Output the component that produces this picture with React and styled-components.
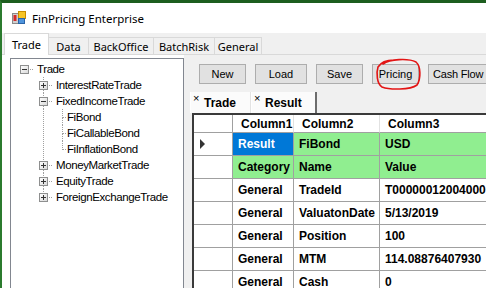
import React from "react";
import styled, { createGlobalStyle } from "styled-components";

const GlobalStyle = createGlobalStyle`
  html, body {
    margin: 0;
    padding: 0;
    overflow: hidden;
    background: #fff;
  }
  body {
    font-family: "Liberation Sans", Arial, sans-serif;
  }
`;

const treeNodes = [
  { label: "Trade", box: "minus", guides: [], up: false, down: false },
  { label: "InterestRateTrade", box: "plus", guides: [false], up: true, down: true },
  { label: "FixedIncomeTrade", box: "minus", guides: [false], up: true, down: true },
  { label: "FiBond", box: null, guides: [false, true], up: true, down: true },
  { label: "FiCallableBond", box: null, guides: [false, true], up: true, down: true },
  { label: "FiInflationBond", box: null, guides: [false, true], up: true, down: false },
  { label: "MoneyMarketTrade", box: "plus", guides: [false], up: true, down: true },
  { label: "EquityTrade", box: "plus", guides: [false], up: true, down: true },
  { label: "ForeignExchangeTrade", box: "plus", guides: [false], up: true, down: false },
];

const rows = [
  { cells: ["Result", "FiBond", "USD"], green: true, current: true },
  { cells: ["Category", "Name", "Value"], green: true },
  { cells: ["General", "TradeId", "T00000012004000"] },
  { cells: ["General", "ValuatonDate", "5/13/2019"] },
  { cells: ["General", "Position", "100"] },
  { cells: ["General", "MTM", "114.08876407930"] },
  { cells: ["General", "Cash", "0"] },
];

const Window = styled.div`
  width: 486px;
  height: 288px;
  box-sizing: border-box;
  border-top: 3px solid #1d5e1f;
  border-left: 2px solid #2b7b2e;
  display: flex;
  flex-direction: column;
  overflow: hidden;
  background: #fff;
`;

const TitleBar = styled.div`
  height: 30px;
  flex: none;
  display: flex;
  align-items: center;
  gap: 6px;
  padding-left: 10px;
  font-family: "Noto Sans", sans-serif;
  font-size: 11.5px;
  color: #000;
`;

const TabStrip = styled.div`
  height: 22px;
  flex: none;
  box-sizing: border-box;
  display: flex;
  align-items: flex-end;
  padding-left: 3px;
  background: #f0f0f0;
  border-bottom: 1px solid #d9d9d9;
`;

const Tab = styled.div`
  width: ${(p) => p.$w}px;
  height: ${(p) => (p.$active ? 22 : 17)}px;
  margin-bottom: ${(p) => (p.$active ? -1 : 0)}px;
  margin-left: -1px;
  box-sizing: border-box;
  display: flex;
  align-items: center;
  justify-content: center;
  border: 1px solid #d9d9d9;
  border-bottom: none;
  background: ${(p) => (p.$active ? "#fff" : "#f0f0f0")};
  font-family: "Noto Sans", sans-serif;
  font-size: 11px;
  color: #000;
  white-space: nowrap;
  position: relative;
  z-index: ${(p) => (p.$active ? 1 : 0)};
`;

const Body = styled.div`
  flex: 1;
  min-height: 0;
  display: flex;
`;

const LeftPane = styled.div`
  width: 182px;
  flex: none;
  box-sizing: border-box;
  padding: 3px 0 0 8px;
  display: flex;
  background: #fff;
`;

const TreeBox = styled.div`
  width: 174px;
  box-sizing: border-box;
  border: 1px solid #828790;
  border-bottom: none;
  padding-top: 2px;
  background: #fff;
`;

const TreeRow = styled.div`
  height: 16px;
  display: flex;
  align-items: center;
  padding-left: 4px;
`;

const TreeLabel = styled.span`
  margin-left: ${(p) => (p.$leaf ? 1 : 3)}px;
  font-size: 11.5px;
  letter-spacing: -0.4px;
  color: #000;
  white-space: nowrap;
`;

const RightPane = styled.div`
  flex: 1;
  min-width: 0;
  display: flex;
  flex-direction: column;
  background: #f0f0f0;
  padding-top: 9px;
`;

const Toolbar = styled.div`
  height: 20px;
  flex: none;
  display: flex;
  gap: 9px;
  padding-left: 15px;
  position: relative;
`;

const Button = styled.div`
  width: ${(p) => p.$w}px;
  flex: none;
  box-sizing: border-box;
  display: flex;
  align-items: center;
  justify-content: ${(p) => (p.$left ? "flex-start" : "center")};
  padding-left: ${(p) => (p.$left ? 4 : 0)}px;
  letter-spacing: ${(p) => (p.$left ? "-0.2px" : "0")};
  background: #e1e1e1;
  border: 1px solid #adadad;
  font-size: 11px;
  color: #000;
  white-space: nowrap;
`;

const Annotation = styled.svg`
  position: absolute;
  left: 190px;
  top: -7px;
  pointer-events: none;
`;

const DocTabs = styled.div`
  height: 22px;
  flex: none;
  margin-top: 7px;
  padding-left: 6px;
  display: flex;
  align-items: flex-end;
`;

const DocTab = styled.div`
  width: ${(p) => p.$w}px;
  height: 21px;
  box-sizing: border-box;
  display: flex;
  align-items: center;
  padding-left: 2px;
  background: #fbfbfb;
  border-left: 1px solid #fff;
  border-right: ${(p) => (p.$last ? "2px solid #6d6d6d" : "1px solid #e3e3e3")};
`;

const Close = styled.span`
  width: 11px;
  align-self: flex-start;
  margin-top: 1px;
  font-size: 11px;
  line-height: 10px;
  color: #000;
`;

const DocLabel = styled.span`
  font-size: 12px;
  font-weight: bold;
  color: #000;
`;

const Grid = styled.div`
  flex: 1;
  min-height: 0;
  margin-left: 8px;
  border-top: 2px solid #3a3a3a;
  border-left: 2px solid #3a3a3a;
  background: #fff;
  display: grid;
  grid-template-columns: 39px 61px 86px 160px;
  grid-template-rows: 18px;
  grid-auto-rows: 23px;
  overflow: hidden;
`;

const Cell = styled.div`
  box-sizing: border-box;
  display: flex;
  align-items: center;
  padding-left: ${(p) => (p.$head ? 8 : 5)}px;
  border-right: 1px solid ${(p) => (p.$head ? "#e2e2e2" : "#a0a0a0")};
  border-bottom: 1px solid #a0a0a0;
  background: ${(p) => p.$bg || "#fff"};
  color: ${(p) => p.$color || "#000"};
  font-size: 12px;
  font-weight: bold;
  white-space: nowrap;
  overflow: hidden;
`;

const RowHead = styled.div`
  box-sizing: border-box;
  display: flex;
  align-items: center;
  padding-left: 6px;
  border-right: 1px solid #a0a0a0;
  border-bottom: 1px solid #a0a0a0;
  background: #fff;
`;

function AppIcon() {
  return (
    <svg width="14" height="14" viewBox="0 0 14 14">
      <rect x="0.5" y="2.5" width="6" height="10" fill="#cfcfcf" stroke="#8a8a8a" />
      <rect x="1.5" y="4" width="3" height="6" fill="#d42a2a" />
      <rect x="6.5" y="0.5" width="7" height="7" fill="#f6c425" stroke="#c98d00" />
      <rect x="6.5" y="7.5" width="6" height="5" fill="#4f95dc" stroke="#2a63a8" />
    </svg>
  );
}

function Connector({ box, up, down }) {
  const leaf = !box;
  const w = leaf ? 13 : 19;
  const dot = { stroke: "#a0a0a0", strokeWidth: 1, strokeDasharray: "1 1" };
  return (
    <svg width={w} height="16" viewBox={`0 0 ${w} 16`} shapeRendering="crispEdges">
      {leaf ? (
        <>
          {up && <line x1="9.5" y1="0" x2="9.5" y2="8.5" {...dot} />}
          {down && <line x1="9.5" y1="8.5" x2="9.5" y2="16" {...dot} />}
          <line x1="10" y1="8.5" x2="13" y2="8.5" {...dot} />
        </>
      ) : (
        <>
          {up && <line x1="9.5" y1="0" x2="9.5" y2="4" {...dot} />}
          {down && <line x1="9.5" y1="13" x2="9.5" y2="16" {...dot} />}
          <line x1="15" y1="8.5" x2="19" y2="8.5" {...dot} />
          <defs>
            <linearGradient id="bx" x1="0" y1="0" x2="1" y2="1">
              <stop offset="0" stopColor="#ffffff" />
              <stop offset="1" stopColor="#d8d8d8" />
            </linearGradient>
          </defs>
          <rect x="5.5" y="4.5" width="8" height="8" fill="url(#bx)" stroke="#8e8f8f" />
          <line x1="7" y1="8.5" x2="12" y2="8.5" stroke="#333" />
          {box === "plus" && <line x1="9.5" y1="6" x2="9.5" y2="11" stroke="#333" />}
        </>
      )}
    </svg>
  );
}

function Guide({ on }) {
  return (
    <svg width="19" height="16" viewBox="0 0 19 16" shapeRendering="crispEdges">
      {on && (
        <line x1="9.5" y1="0" x2="9.5" y2="16" stroke="#a0a0a0" strokeDasharray="1 1" />
      )}
    </svg>
  );
}

function PricingCircle() {
  return (
    <Annotation width="48" height="34" viewBox="0 0 48 34">
      <path
        d="M9,7 C16,2 34,1 42,5 C47,9 47,22 43,28 C36,33 16,33 8,30 C3,27 2,16 4,10 C7,5 13,3 20,3"
        fill="none"
        stroke="#e31414"
        strokeWidth="1.6"
        strokeLinecap="round"
      />
    </Annotation>
  );
}

function Triangle() {
  return (
    <svg width="6" height="10" viewBox="0 0 6 10">
      <polygon points="0,0 5,5 0,10" fill="#333" />
    </svg>
  );
}

export default function App() {
  const tabs = [
    { label: "Trade", w: 45, active: true },
    { label: "Data", w: 41 },
    { label: "BackOffice", w: 66 },
    { label: "BatchRisk", w: 62 },
    { label: "General", w: 48 },
  ];
  const buttons = [
    { label: "New", w: 47 },
    { label: "Load", w: 52 },
    { label: "Save", w: 47 },
    { label: "Pricing", w: 47 },
    { label: "Cash Flow", w: 70, left: true },
  ];

  return (
    <>
      <GlobalStyle />
      <Window>
        <TitleBar>
          <AppIcon />
          <span>FinPricing Enterprise</span>
        </TitleBar>
        <TabStrip>
          {tabs.map((t) => (
            <Tab key={t.label} $w={t.w} $active={t.active}>
              {t.label}
            </Tab>
          ))}
        </TabStrip>
        <Body>
          <LeftPane>
            <TreeBox>
              {treeNodes.map((n) => (
                <TreeRow key={n.label}>
                  {n.guides.map((g, i) => (
                    <Guide key={i} on={g} />
                  ))}
                  <Connector box={n.box} up={n.up} down={n.down} />
                  <TreeLabel $leaf={!n.box}>{n.label}</TreeLabel>
                </TreeRow>
              ))}
            </TreeBox>
          </LeftPane>
          <RightPane>
            <Toolbar>
              {buttons.map((b) => (
                <Button key={b.label} $w={b.w} $left={b.left}>
                  {b.label}
                </Button>
              ))}
              <PricingCircle />
            </Toolbar>
            <DocTabs>
              <DocTab $w={61}>
                <Close>×</Close>
                <DocLabel>Trade</DocLabel>
              </DocTab>
              <DocTab $w={66} $last>
                <Close>×</Close>
                <DocLabel>Result</DocLabel>
              </DocTab>
            </DocTabs>
            <Grid>
              <RowHead />
              <Cell $head>Column1</Cell>
              <Cell $head>Column2</Cell>
              <Cell $head>Column3</Cell>
              {rows.map((r, ri) => (
                <React.Fragment key={ri}>
                  <RowHead>{r.current && <Triangle />}</RowHead>
                  {r.cells.map((c, ci) => {
                    const selected = r.current && ci === 0;
                    return (
                      <Cell
                        key={ci}
                        $bg={selected ? "#0078d7" : r.green ? "#90ee90" : "#fff"}
                        $color={selected ? "#fff" : "#000"}
                      >
                        {c}
                      </Cell>
                    );
                  })}
                </React.Fragment>
              ))}
            </Grid>
          </RightPane>
        </Body>
      </Window>
    </>
  );
}
